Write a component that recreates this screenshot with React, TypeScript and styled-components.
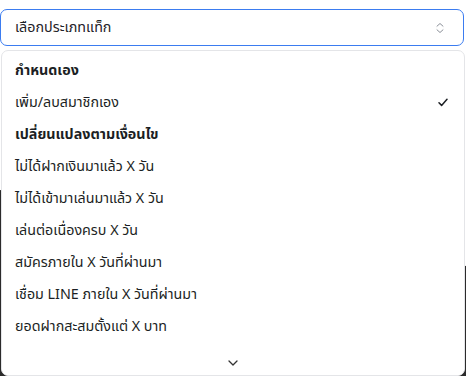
import React from "react";
import styled, { createGlobalStyle } from "styled-components";

const Global = createGlobalStyle`
  html, body { margin: 0; padding: 0; background: #ffffff; }
  body { font-family: "Noto Sans", "Noto Sans Thai", "Noto Sans CJK SC", sans-serif; }
  * { box-sizing: border-box; }
`;

const Page = styled.div`
  position: relative;
  width: 466px;
  height: 376px;
  overflow: hidden;
  padding: 9px 2px 0 0;
`;

const Backdrop = styled.div`
  position: absolute;
  inset: 0;
  background: #2b2b2b;
  clip-path: polygon(0 190px, 466px 266px, 466px 376px, 0 376px);
`;

const Stack = styled.div`
  position: relative;
  display: flex;
  flex-direction: column;
  gap: 4px;
`;

const Trigger = styled.button`
  display: flex;
  align-items: center;
  justify-content: space-between;
  height: 37px;
  width: 464px;
  padding: 0 18px 0 14px;
  background: #fff;
  border: 1px solid #3b7cf0;
  border-radius: 7px;
  font-family: inherit;
  font-size: 14.3px;
  color: #1f2328;
`;

const Popover = styled.div`
  position: relative;
  margin-left: 1px;
  width: 464px;
  height: 326px;
  background: #fff;
  border: 1px solid #e4e5e8;
  border-radius: 7px;
  overflow: hidden;
`;

const List = styled.div`
  display: flex;
  flex-direction: column;
  padding: 3px 0 0 0;
`;

const Row = styled.div<{ $bold?: boolean }>`
  display: flex;
  align-items: center;
  justify-content: space-between;
  height: 32px;
  flex-shrink: 0;
  padding: 0 16px 0 13px;
  font-size: 14.3px;
  font-weight: ${(p) => (p.$bold ? 700 : 400)};
  color: #1c1f24;
  white-space: nowrap;
`;

const ScrollDown = styled.div`
  position: absolute;
  left: 0;
  right: 0;
  bottom: 0;
  height: 26px;
  display: flex;
  align-items: center;
  justify-content: center;
  padding-top: 2px;
  background: #fff;
  color: #333;
`;

const UpDown = () => (
  <svg width="10" height="12" viewBox="0 0 10 12" fill="none" stroke="#8a8f98" strokeWidth="1" strokeLinecap="round" strokeLinejoin="round">
    <path d="M2 4.2 L5 1.5 L8 4.2" />
    <path d="M2 7.8 L5 10.5 L8 7.8" />
  </svg>
);

const Check = () => (
  <svg width="10" height="9" viewBox="0 0 10 9" fill="none" stroke="#1c1f24" strokeWidth="1.5" strokeLinecap="round" strokeLinejoin="round">
    <path d="M1 4.8 L3.6 7.4 L9 1.2" />
  </svg>
);

const ChevronDown = () => (
  <svg width="10" height="6" viewBox="0 0 10 6" fill="none" stroke="#333" strokeWidth="1.3" strokeLinecap="round" strokeLinejoin="round">
    <path d="M1 1 L5 5 L9 1" />
  </svg>
);

const items: { label: string; bold?: boolean; checked?: boolean }[] = [
  { label: "กำหนดเอง", bold: true },
  { label: "เพิ่ม/ลบสมาชิกเอง", checked: true },
  { label: "เปลี่ยนแปลงตามเงื่อนไข", bold: true },
  { label: "ไม่ได้ฝากเงินมาแล้ว X วัน" },
  { label: "ไม่ได้เข้ามาเล่นมาแล้ว X วัน" },
  { label: "เล่นต่อเนื่องครบ X วัน" },
  { label: "สมัครภายใน X วันที่ผ่านมา" },
  { label: "เชื่อม LINE ภายใน X วันที่ผ่านมา" },
  { label: "ยอดฝากสะสมตั้งแต่ X บาท" },
  { label: "ยอดเล่นสะสมตั้งแต่ X บาท" },
];

export default function App() {
  return (
    <Page>
      <Global />
      <Backdrop />
      <Stack>
        <Trigger>
          <span>เลือกประเภทแท็ก</span>
          <UpDown />
        </Trigger>
        <Popover>
          <List>
            {items.map((it) => (
              <Row key={it.label} $bold={it.bold}>
                <span>{it.label}</span>
                {it.checked && <Check />}
              </Row>
            ))}
          </List>
          <ScrollDown>
            <ChevronDown />
          </ScrollDown>
        </Popover>
      </Stack>
    </Page>
  );
}
